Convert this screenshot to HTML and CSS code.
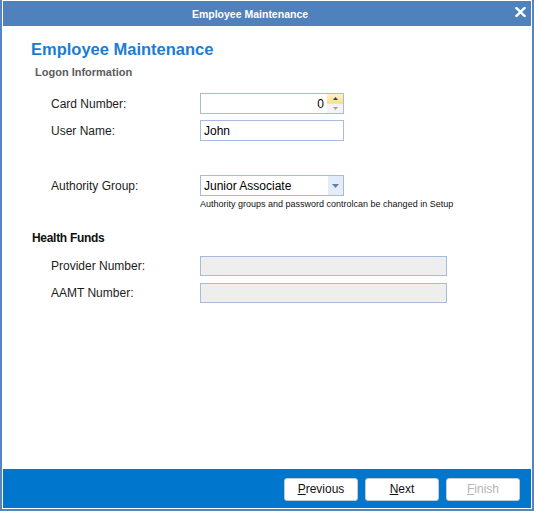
FILE: index.html
```html
<!DOCTYPE html>
<html lang="en">
<head>
    <meta charset="UTF-8">
    <title>Employee Maintenance</title>
    <link rel="stylesheet" href="styles.css">
</head>
<body>
    <div class="window">
        <div class="title-bar">
            <span class="title-text">Employee Maintenance</span>
            <svg class="close-icon" width="11" height="10" viewBox="0 0 11 10">
                <path d="M1.5 1 L9.5 9 M9.5 1 L1.5 9" stroke="#fff" stroke-width="2.4" stroke-linecap="square"/>
            </svg>
        </div>

        <div class="page">
            <h1 class="page-title">Employee Maintenance</h1>
            <div class="section-title">Logon Information</div>

            <div class="field card-row">
                <label>Card Number:</label>
                <div class="input spin">
                    <span class="value">0</span>
                    <div class="spin-buttons">
                        <div class="spin-up">
                            <svg width="5" height="3" viewBox="0 0 5 3"><path d="M0 3 L2.5 0 L5 3 Z" fill="#1f3e72"/></svg>
                        </div>
                        <div class="spin-down">
                            <svg width="5" height="3" viewBox="0 0 5 3"><path d="M0 0 L2.5 3 L5 0 Z" fill="#a0a0a0"/></svg>
                        </div>
                    </div>
                </div>
            </div>
            <div class="field">
                <label>User Name:</label>
                <div class="input"><span class="value-left">John</span></div>
            </div>

            <div class="field group-row">
                <label>Authority Group:</label>
                <div class="input combo">
                    <span class="value-left">Junior Associate</span>
                    <div class="drop-button">
                        <svg width="7" height="4" viewBox="0 0 7 4"><path d="M0 0 L7 0 L3.5 4 Z" fill="#5f7fae"/></svg>
                    </div>
                </div>
            </div>
            <div class="hint">Authority groups and password controlcan be changed in Setup</div>

            <div class="section-title dark">Health Funds</div>
            <div class="field wide">
                <label>Provider Number:</label>
                <div class="input disabled"></div>
            </div>
            <div class="field wide">
                <label>AAMT Number:</label>
                <div class="input disabled"></div>
            </div>
        </div>

        <div class="footer">
            <button class="btn"><u>P</u>revious</button>
            <button class="btn"><u>N</u>ext</button>
            <button class="btn" disabled><u>F</u>inish</button>
        </div>
    </div>
</body>
</html>
```

FILE: styles.css
```css
body {
    margin: 0;
    background: #fff;
    font-family: "Liberation Sans", Arial, sans-serif;
    font-size: 12px;
    color: #1c1c1c;
}

.window {
    box-sizing: border-box;
    width: 534px;
    height: 511px;
    border: 2px solid #5586c2;
    border-top: none;
    padding: 1px 1px 1px 1px;
    display: flex;
    flex-direction: column;
}

.title-bar {
    height: 25px;
    background: #4f81bd;
    color: #fff;
    display: flex;
    align-items: center;
    justify-content: center;
    position: relative;
}

.title-text {
    font-weight: bold;
    font-size: 10.5px;
    margin-right: 34px;
}

.close-icon {
    position: absolute;
    right: 5px;
    top: 6px;
}

.page {
    flex: 1;
    padding: 13px 0 0 28px;
}

.page-title {
    margin: 0;
    font-size: 16.5px;
    line-height: 20px;
    font-weight: bold;
    color: #1a7dd5;
}

.section-title {
    margin: 6px 0 0 4px;
    font-size: 11px;
    line-height: 14px;
    font-weight: bold;
    color: #5c5c5c;
}

.section-title.dark {
    margin: 21px 0 11px 1px;
    font-size: 12px;
    color: #111;
    letter-spacing: -0.3px;
}

.field {
    display: flex;
    align-items: center;
    height: 21px;
    margin-bottom: 6px;
    padding-left: 20px;
}

.card-row {
    margin-top: 14px;
}

.group-row {
    margin-top: 34px;
    margin-bottom: 3px;
}

.field label {
    width: 149px;
}

.input {
    box-sizing: border-box;
    width: 144px;
    height: 21px;
    border: 1px solid #a7bcdc;
    background: #fff;
    display: flex;
    align-items: center;
    font-size: 12px;
    color: #000;
}

.value {
    flex: 1;
    text-align: right;
    padding-right: 3px;
}

.value-left {
    flex: 1;
    padding-left: 3px;
}

.spin-buttons {
    width: 16px;
    height: 19px;
    display: flex;
    flex-direction: column;
}

.spin-up,
.spin-down {
    flex: 1;
    display: flex;
    align-items: center;
    justify-content: center;
}

.spin-up {
    background: linear-gradient(#fff3c8, #fcdf86);
    border-bottom: 1px solid #f1e3b8;
}

.spin-down {
    background: #f3f3f3;
}

.drop-button {
    width: 15px;
    height: 19px;
    background: #e4ecf7;
    display: flex;
    align-items: center;
    justify-content: center;
}

.hint {
    padding-left: 169px;
    font-size: 9px;
    line-height: 11px;
    color: #111;
}

.field.wide {
    height: 20px;
    margin-bottom: 7px;
}

.field.wide .input {
    width: 247px;
    height: 20px;
}

.input.disabled {
    background: #eeeeee;
}

.footer {
    height: 39px;
    background: #0077cc;
    display: flex;
    align-items: center;
    justify-content: flex-end;
    gap: 7px;
    padding-right: 11px;
}

.btn {
    box-sizing: border-box;
    width: 74px;
    height: 23px;
    background: #fff;
    border: 1px solid #c9c9c9;
    border-radius: 3px;
    font-family: "Liberation Sans", Arial, sans-serif;
    font-size: 12px;
    color: #111;
    padding: 0;
    margin-top: 1px;
}

.btn:disabled {
    color: #b4b4b4;
}
```
